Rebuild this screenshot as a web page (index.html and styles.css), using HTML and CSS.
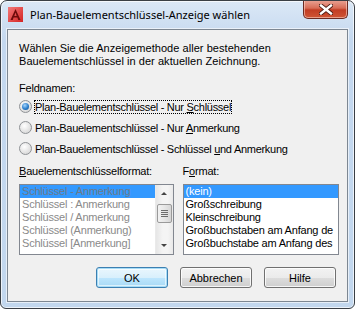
FILE: index.html
```html
<!DOCTYPE html>
<html lang="de">
<head>
  <meta charset="UTF-8" />
  <title>Plan-Bauelementschlüssel-Anzeige wählen</title>
  <link rel="stylesheet" href="styles.css">
</head>
<body>

  <div class="window">
    <div class="titlebar">
      <svg class="app-icon" width="15" height="15" viewBox="0 0 15 15">
        <defs>
          <linearGradient id="ig" x1="0" y1="0" x2="1" y2="1">
            <stop offset="0" stop-color="#f37a7a" />
            <stop offset="1" stop-color="#d42424" />
          </linearGradient>
        </defs>
        <rect x="0" y="0" width="15" height="15" fill="url(#ig)" />
        <path d="M7.5 2 L12.5 13 L10.3 13 L9.4 10.6 L5.6 10.6 L4.7 13 L2.5 13 Z M7.5 5.6 L6.3 9 L8.7 9 Z" fill="#6e0b0b" />
      </svg>
      <span class="title">Plan-Bauelementschlüssel-Anzeige wählen</span>
      <div class="close">
        <svg width="14" height="11" viewBox="0 0 14 11">
          <path d="M2 1.5 L12 9.5 M12 1.5 L2 9.5" stroke="#4a1a12" stroke-width="4.2" stroke-linecap="square" />
          <path d="M2 1.5 L12 9.5 M12 1.5 L2 9.5" stroke="#ffffff" stroke-width="2.4" stroke-linecap="square" />
        </svg>
      </div>
    </div>

    <div class="client">
      <p class="intro">Wählen Sie die Anzeigemethode aller bestehenden<br>Bauelementschlüssel in der aktuellen Zeichnung.</p>

      <div class="label feld">Feldnamen:</div>
      <div class="radios">
        <div class="radio-row"><span class="radio checked"></span><span class="focus">Plan-Bauelementschlüssel - Nur <u>S</u>chlüssel</span></div>
        <div class="radio-row"><span class="radio"></span><span>Plan-Bauelementschlüssel - Nur <u>A</u>nmerkung</span></div>
        <div class="radio-row"><span class="radio"></span><span>Plan-Bauelementschlüssel - Schlüssel <u>u</u>nd Anmerkung</span></div>
      </div>

      <div class="lists">
        <div class="col left-col">
          <div class="label"><u>B</u>auelementschlüsselformat:</div>
          <div class="listbox disabled">
            <ul class="items">
              <li class="sel">Schlüssel - Anmerkung</li>
              <li>Schlüssel : Anmerkung</li>
              <li>Schlüssel / Anmerkung</li>
              <li>Schlüssel (Anmerkung)</li>
              <li>Schlüssel [Anmerkung]</li>
            </ul>
            <div class="scrollbar">
              <div class="arrow up"></div>
              <div class="track">
                <div class="thumb"><span></span><span></span><span></span><span></span></div>
              </div>
              <div class="arrow down"></div>
            </div>
          </div>
        </div>
        <div class="col right-col">
          <div class="label">F<u>o</u>rmat:</div>
          <div class="listbox">
            <ul class="items">
              <li class="sel">(kein)</li>
              <li>Großschreibung</li>
              <li>Kleinschreibung</li>
              <li>Großbuchstaben am Anfang de</li>
              <li>Großbuchstabe am Anfang des</li>
            </ul>
          </div>
        </div>
      </div>

      <div class="buttons">
        <button class="default">OK</button>
        <button>Abbrechen</button>
        <button>Hilfe</button>
      </div>
    </div>
  </div>

</body>
</html>
```

FILE: styles.css
```css
body {
  margin: 0;
  background: #ffffff;
  font-family: "Liberation Sans", Arial, sans-serif;
}
.window {
  width: 355px;
  height: 309px;
  box-sizing: border-box;
  border: 1px solid #3a3f45;
  border-radius: 7px 7px 6px 6px;
  background: linear-gradient(#dbe8f6, #c4d8ef 40px, #c2d7ee);
  box-shadow: inset 0 0 0 1px rgba(255,255,255,0.7);
  display: flex;
  flex-direction: column;
  overflow: hidden;
}
.titlebar {
  height: 28px;
  display: flex;
  align-items: center;
  position: relative;
  padding-left: 7px;
}
.app-icon {
  margin-top: -1px;
}
.title {
  font-family: "Noto Sans", "Open Sans", sans-serif;
  font-size: 11px;
  color: #000;
  margin-left: 7px;
  margin-top: -1px;
}
.close {
  position: absolute;
  top: -1px;
  right: 6px;
  width: 45px;
  height: 19px;
  box-sizing: border-box;
  border: 1px solid #6b2a22;
  border-top: none;
  border-radius: 0 0 5px 5px;
  background: linear-gradient(#eaa597, #d86d57 45%, #c23d24 55%, #cf5535);
  box-shadow: inset 0 0 0 1px rgba(255,220,210,0.55);
  display: flex;
  justify-content: center;
  align-items: center;
}
.client {
  margin: 0 6px 6px 6px;
  flex: 1;
  background: #f0f0f0;
  border: 1px solid #7d8792;
  box-shadow: 0 0 0 1px rgba(255,255,255,0.6);
  padding: 12px 8px 0 11px;
  font-size: 11px;
  color: #000;
}
.intro {
  margin: 0;
  line-height: 13px;
  letter-spacing: 0.05px;
}
.label {
  line-height: 13px;
  letter-spacing: -0.2px;
}
.feld {
  margin-top: 14px;
}
.radios {
  margin-top: 1px;
  letter-spacing: -0.28px;
}
.radio-row {
  height: 21px;
  display: flex;
  align-items: center;
}
.radio {
  width: 13px;
  height: 13px;
  box-sizing: border-box;
  border-radius: 50%;
  border: 1px solid #8f9296;
  background: radial-gradient(circle at 40% 35%, #ffffff, #e4e4e4 55%, #cfcfcf);
  margin-right: 3px;
  position: relative;
}
.radio.checked::after {
  content: "";
  position: absolute;
  left: 2px;
  top: 2px;
  width: 7px;
  height: 7px;
  border-radius: 50%;
  background: radial-gradient(circle at 40% 35%, #a6d6ff, #2d7fcb 55%, #0d4a8b);
}
.focus {
  outline: 1px dotted #000;
  outline-offset: 0;
}
u {
  text-decoration: underline;
  text-underline-offset: 1px;
}
.lists {
  display: flex;
  gap: 9px;
  margin-top: 6px;
}
.left-col {
  width: 155px;
}
.right-col {
  width: 157px;
}
.listbox {
  margin-top: 6px;
  height: 71px;
  box-sizing: border-box;
  border: 1px solid #828790;
  background: #fff;
  display: flex;
  overflow: hidden;
}
.items {
  list-style: none;
  margin: 0;
  padding: 0;
  flex: 1;
  min-width: 0;
  letter-spacing: -0.2px;
}
.items li {
  line-height: 13px;
  height: 13px;
  padding-left: 2px;
  white-space: nowrap;
  overflow: hidden;
}
.items li.sel {
  background: #3399ff;
  color: #fff;
}
.disabled .items li {
  color: #8a8a8a;
}
.disabled .items li.sel {
  color: #6d7a88;
}
.scrollbar {
  width: 17px;
  display: flex;
  flex-direction: column;
  background: linear-gradient(90deg, #e6e6e6, #f4f4f4 40%, #f4f4f4 70%, #e9e9e9);
  border-left: 1px solid #eaeaea;
}
.arrow {
  height: 17px;
  position: relative;
}
.arrow::after {
  content: "";
  position: absolute;
  left: 5px;
  border-left: 3px solid transparent;
  border-right: 3px solid transparent;
}
.arrow.up::after {
  top: 7px;
  border-bottom: 3px solid #444;
}
.arrow.down::after {
  top: 7px;
  border-top: 3px solid #444;
}
.track {
  flex: 1;
  padding-top: 2px;
}
.thumb {
  margin: 0 1px;
  height: 19px;
  box-sizing: border-box;
  border: 1px solid #9a9a9a;
  border-radius: 2px;
  background: linear-gradient(90deg, #f2f2f2, #e6e6e6 50%, #d6d6d6);
  display: flex;
  flex-direction: column;
  justify-content: center;
  align-items: center;
  gap: 1px;
}
.thumb span {
  width: 7px;
  height: 1px;
  background: #6d6d6d;
}
.buttons {
  display: flex;
  justify-content: flex-end;
  gap: 12px;
  margin-top: 12px;
  padding-right: 3px;
}
button {
  width: 72px;
  height: 21px;
  font-family: "Liberation Sans", Arial, sans-serif;
  font-size: 11px;
  color: #000;
  border: 1px solid #707070;
  border-radius: 3px;
  background: linear-gradient(#f2f2f2, #ebebeb 50%, #dddddd 51%, #cfcfcf);
  box-shadow: inset 0 0 0 1px rgba(255,255,255,0.8);
  padding: 0;
}
button.default {
  border-color: #3c7fb1;
  background: linear-gradient(#eaf6fd, #d9f0fc 50%, #bee6fd 51%, #a7d9f5);
  box-shadow: inset 0 0 0 1px #a6dcf7, inset 0 0 0 2px rgba(255,255,255,0.6);
}
```
